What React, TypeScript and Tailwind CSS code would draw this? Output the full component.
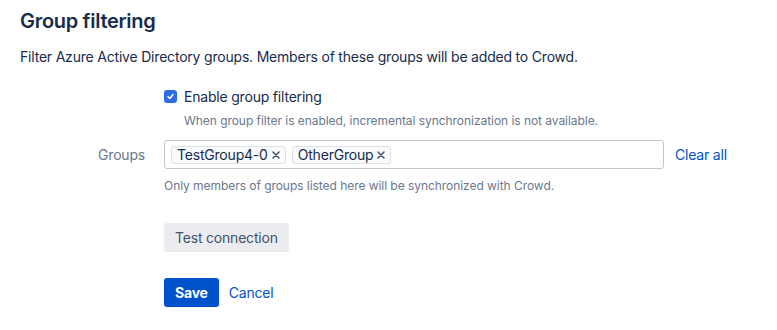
import React from "react";

function Tag({ label }: { label: string }) {
  return (
    <span className="flex h-[18px] items-center gap-[4px] rounded-[3px] border border-[#DFE1E6] bg-[#FAFBFC] pl-[5px] pr-[5px] text-[14px] leading-none tracking-[-0.2px] text-[#172B4D]">
      {label}
      <svg width="8" height="8" viewBox="0 0 8 8" className="mt-[1px]">
        <path d="M1 1 L7 7 M7 1 L1 7" stroke="#42526E" strokeWidth="1.5" strokeLinecap="round" />
      </svg>
    </span>
  );
}

export default function App() {
  return (
    <div
      className="h-[330px] w-[777px] bg-white pl-[20px] pt-[9px] text-[#172B4D]"
      style={{ fontFamily: "Inter, 'Noto Sans', sans-serif" }}
    >
      <h2 className="text-[20px] font-semibold leading-[24px] tracking-[-0.3px] text-[#172B4D]">Group filtering</h2>
      <p className="mt-[14px] text-[14px] leading-[20px] tracking-[-0.2px]">
        Filter Azure Active Directory groups. Members of these groups will be added to Crowd.
      </p>

      <div className="mt-[19px] flex">
        <div className="w-[144px] shrink-0" />
        <div className="flex flex-col">
          <label className="flex h-[20px] items-center gap-[7px] text-[14px] tracking-[-0.2px]">
            <span className="flex h-[13px] w-[13px] items-center justify-center rounded-[3px] bg-[#2D6FE3]">
              <svg width="9" height="9" viewBox="0 0 9 9">
                <path d="M2 4.8 L3.8 6.5 L7 2.6" stroke="white" strokeWidth="1.5" fill="none" strokeLinecap="round" strokeLinejoin="round" />
              </svg>
            </span>
            Enable group filtering
          </label>
          <div className="mt-[7px] pl-[20px] text-[12px] leading-[16px] tracking-[-0.05px] text-[#6B778C]">
            When group filter is enabled, incremental synchronization is not available.
          </div>
        </div>
      </div>

      <div className="mt-[11px] flex items-center">
        <div className="w-[125px] shrink-0 text-right text-[14px] tracking-[-0.2px] text-[#6B778C]">Groups</div>
        <div className="ml-[19px] flex h-[29px] w-[500px] items-center gap-[6px] rounded-[3px] border border-[#C1C7D0] bg-white pl-[6px]">
          <Tag label="TestGroup4-0" />
          <Tag label="OtherGroup" />
        </div>
        <a className="ml-[11px] text-[14px] tracking-[-0.2px] text-[#0052CC]">Clear all</a>
      </div>
      <div className="ml-[144px] mt-[9px] text-[12px] leading-[16px] tracking-[-0.05px] text-[#6B778C]">
        Only members of groups listed here will be synchronized with Crowd.
      </div>

      <div className="ml-[144px] mt-[29px] flex">
        <button className="h-[29px] rounded-[3px] bg-[#EBECF0] px-[11px] text-[14px] tracking-[-0.2px] text-[#42526E]">
          Test connection
        </button>
      </div>

      <div className="ml-[144px] mt-[26px] flex items-center gap-[10px]">
        <button className="h-[29px] rounded-[3px] bg-[#0052CC] px-[11px] text-[14px] font-bold tracking-[-0.2px] text-white">
          Save
        </button>
        <a className="text-[14px] tracking-[-0.2px] text-[#0052CC]">Cancel</a>
      </div>
    </div>
  );
}
